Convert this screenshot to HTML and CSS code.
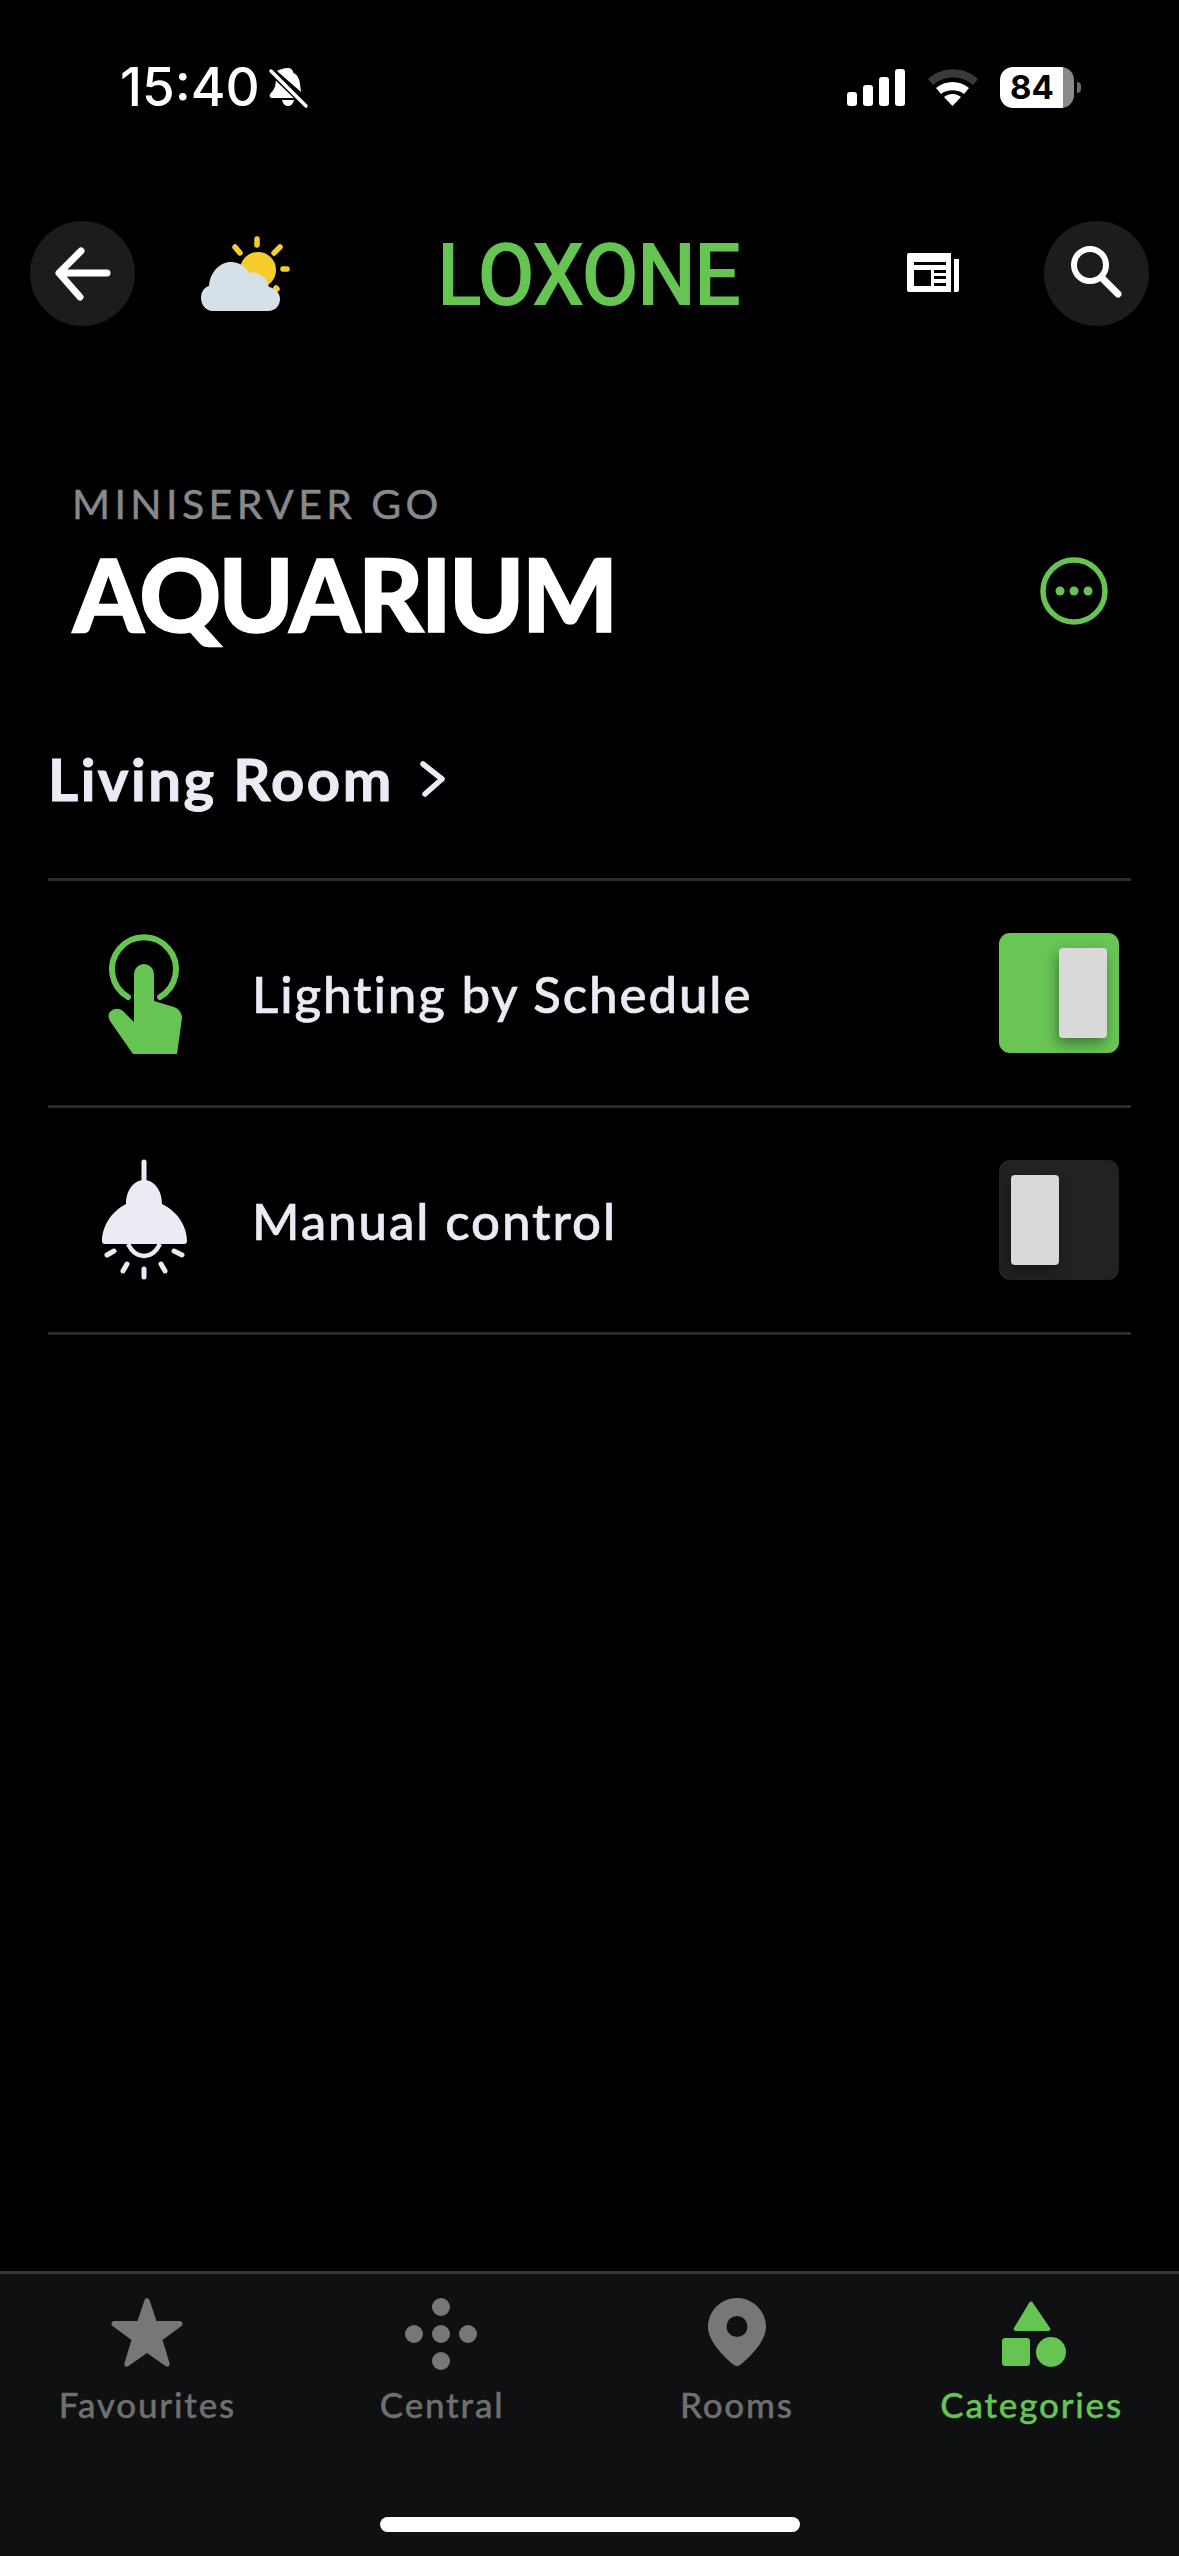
FILE: index.html
```html
<!DOCTYPE html>
<html lang="en">
<head>
<meta charset="utf-8">
<title>Loxone Aquarium</title>
<link rel="stylesheet" href="styles.css">
</head>
<body>
<div class="app">
  <div class="status">
    <div class="status-left">
      <span class="time">15:40</span>
      <svg class="bell" viewBox="266 66 43 44" width="43" height="44">
        <path fill="#fff" d="M287 68c3 0 5 2 5.500 5 4 2 6 6 6.500 11l1 8-24-21 c2-1 6-3 11-3zM276 77l19 21h-24c-2 0-3-2-2-4 3-3 5-6 5.500-10 .2-3 .7-5 1.500-7zM281 100h12c-1 4-3 6-6 6s-5-2-6-6z"/>
        <path stroke="#000" stroke-width="7" d="M268 69l39 38"/>
        <path stroke="#fff" stroke-width="3.500" stroke-linecap="round" d="M270 71l35 35"/>
      </svg>
    </div>
    <div class="status-right">
      <svg class="signal" viewBox="846 69 58 37" width="58" height="37">
        <rect x="846" y="92" width="10" height="14" rx="3" fill="#fff"/>
        <rect x="862" y="85" width="10" height="21" rx="3" fill="#fff"/>
        <rect x="878" y="77" width="10" height="29" rx="3" fill="#fff"/>
        <rect x="894" y="69" width="10" height="37" rx="3" fill="#fff"/>
      </svg>
      <svg class="wifi" viewBox="927 69 50 37" width="50" height="37">
        <path fill="#3a3a3a" d="M927 79c14-13 36-13 50 0l-5 6c-11-10-29-10-40 0z"/>
        <path fill="#fff" d="M935 88c9-8 24-8 33 0l-5 6c-6-5-17-5-23 0zM943 97c5-4 12-4 17 0l-8.500 9z"/>
      </svg>
      <div class="battery">
        <span class="battery-level">84</span>
        <span class="battery-nub"></span>
      </div>
    </div>
  </div>

  <header class="topbar">
    <button class="round-btn">
      <svg viewBox="0 0 105 105" width="105" height="105"><path fill="none" stroke="#fff" stroke-width="7" stroke-linecap="round" stroke-linejoin="round" d="M77 52H30M51 30L29 52l21 24"/></svg>
    </button>
    <svg class="weather" viewBox="195 230 100 85" width="100" height="85">
      <g stroke="#f6ce2c" stroke-width="5.500" stroke-linecap="round">
        <path d="M257 237v6M235 245l5 6M280 245l-6 6M283 267h4M276 286l1 1"/>
      </g>
      <circle cx="258" cy="268" r="18" fill="#f6ce2c"/>
      <path fill="#d5e0e8" d="M213 309c-8 0-12-7-12-13 0-7 4-11 8-12 1-14 11-24 22-24 9 0 15 5 18 11 9-2 17 3 20 14 6 1 11 6 11 12 0 7-5 12-12 12z"/>
    </svg>
    <div class="logo">LOXONE</div>
    <svg class="news" viewBox="907 253 52 39" width="52" height="39">
      <path fill="#fff" d="M909 253h42v39h-42a2 2 0 0 1-2-2v-35a2 2 0 0 1 2-2zM954 259h5v31a2 2 0 0 1-2 2h-3z"/>
      <path fill="#000" d="M914 262h32v3h-32zM914 270h17v16h-17zM934 270h12v3h-12zM934 276h12v3h-12zM934 283h12v3h-12z"/>
    </svg>
    <button class="round-btn">
      <svg viewBox="1044 221 105 105" width="105" height="105"><circle cx="1090" cy="265" r="16" fill="none" stroke="#fff" stroke-width="6"/><path stroke="#fff" stroke-width="7" stroke-linecap="round" d="M1103 279l15 15"/></svg>
    </button>
  </header>

  <section class="title-block">
    <div class="title-text">
      <div class="eyebrow">MINISERVER GO</div>
      <h1 class="title">AQUARIUM</h1>
    </div>
    <svg class="more" viewBox="0 0 68 68" width="68" height="68">
      <circle cx="34" cy="34" r="31" fill="none" stroke="#66c452" stroke-width="5.500"/>
      <circle cx="20" cy="34" r="4.500" fill="#66c452"/><circle cx="34" cy="34" r="4.500" fill="#66c452"/><circle cx="48" cy="34" r="4.500" fill="#66c452"/>
    </svg>
  </section>

  <h2 class="group">Living Room
    <svg class="chev" viewBox="0 0 26 36" width="26" height="36"><path fill="none" stroke="#ebebf5" stroke-width="5.500" stroke-linecap="round" stroke-linejoin="round" d="M3 3l19 15L5 33"/></svg>
  </h2>

  <div class="list">
    <div class="row">
      <svg class="row-icon" viewBox="100 925 90 135" width="90" height="135">
        <path fill="none" stroke="#66c452" stroke-width="6" stroke-linecap="round" d="M128 996a32 32 0 1 1 32 0"/>
        <path fill="#66c452" d="M134 973a10 10 0 0 1 20 0v27l20 6c5 2 8 6 8 11l-5 36h-44l-23-33c-2-4-2-8 1-10 4-3 8-3 12 0l11 11z"/>
      </svg>
      <span class="row-label">Lighting by Schedule</span>
      <div class="toggle on"><span class="knob"></span></div>
    </div>
    <div class="row">
      <svg class="row-icon" viewBox="100 1155 90 135" width="90" height="135">
        <path stroke="#ebebf5" stroke-width="5" stroke-linecap="round" d="M144 1164v20"/>
        <path fill="#ebebf5" d="M126 1206c0-14 8-24 18-24s18 10 18 24c15 7 25 22 25 37 0 2-1 3-3 3h-79c-2 0-3-1-3-3 0-15 10-30 24-37z"/>
        <path fill="none" stroke="#ebebf5" stroke-width="4.500" d="M128 1246c4 8 10 12 16 12s12-4 16-12"/>
        <g stroke="#ebebf5" stroke-width="5" stroke-linecap="round" fill="none">
          <path d="M107 1257l7-4M123 1273l4-7M144 1271v8M161 1266l4 7M174 1253l8 4"/>
        </g>
      </svg>
      <span class="row-label">Manual control</span>
      <div class="toggle off"><span class="knob"></span></div>
    </div>
  </div>

  <nav class="tabs">
    <div class="tab">
      <svg viewBox="107 2295 80 75" width="80" height="75"><path fill="#777" d="M147 2298c1 0 2 1 2.500 2l7 21h23c3 0 4 3 2 5l-19 14 7 23c1 3-2 5-4 3l-18.500-13-18.500 13c-2 2-5 0-4-3l7-23-19-14c-2-2-1-5 2-5h23l7-21c.5-1 1.500-2 2.500-2z"/></svg>
      <span class="tab-label">Favourites</span>
    </div>
    <div class="tab">
      <svg viewBox="402 2295 80 75" width="80" height="75"><g fill="#777"><ellipse cx="441" cy="2307" rx="9" ry="9"/><ellipse cx="414" cy="2334" rx="9" ry="9"/><ellipse cx="441" cy="2334" rx="9" ry="9"/><ellipse cx="468" cy="2334" rx="9" ry="9"/><ellipse cx="441" cy="2361" rx="9" ry="9"/></g></svg>
      <span class="tab-label">Central</span>
    </div>
    <div class="tab">
      <svg viewBox="698 2295 80 75" width="80" height="75"><path fill="#777" fill-rule="evenodd" d="M738 2298c16 0 29 13 29 29 0 14-16 30-26 38-2 1.500-4 1.500-6 0-10-8-26-24-26-38 0-16 13-29 29-29zM738 2316a10.500 10.500 0 1 0 0 21 10.500 10.500 0 0 0 0-21z"/></svg>
      <span class="tab-label">Rooms</span>
    </div>
    <div class="tab active">
      <svg viewBox="990 2295 80 75" width="80" height="75"><g fill="#66c452"><path d="M1027 2303c1-2 3-2 4 0l17 25c1 1 0 3-2 3h-32c-2 0-3-2-2-3z"/><rect x="1000" y="2338" width="28" height="28" rx="3"/><circle cx="1049" cy="2352" r="15"/></g></svg>
      <span class="tab-label">Categories</span>
    </div>
    <div class="home-indicator"></div>
  </nav>
</div>
</body>
</html>
```
FILE: styles.css
```css
* { box-sizing: border-box; }
html, body { margin: 0; padding: 0; background: #000; }
.app {
  width: 1179px;
  height: 2556px;
  display: flex;
  flex-direction: column;
  background: #000;
  font-family: "Lato", "Liberation Sans", sans-serif;
  color: #ebebf5;
  overflow: hidden;
}
svg { display: block; flex: none; }

/* status bar */
.status {
  height: 221px;
  padding: 60px 98px 0 120px;
  display: flex;
  justify-content: space-between;
  align-items: flex-start;
}
.status-left { display: flex; align-items: center; gap: 7px; }
.time {
  font: 500 53px/54px "Inter", sans-serif;
  color: #fff;
}
.bell { margin-top: 2px; }
.status-right { display: flex; align-items: center; margin-top: 7px; }
.wifi { margin-left: 23px; }
.battery {
  position: relative;
  margin-left: 22px;
  margin-right: 7px;
  width: 74px;
  height: 41px;
  border-radius: 13px;
  background: linear-gradient(90deg, #fff 0 63px, #8a8a8a 63px);
  display: flex;
  align-items: center;
  justify-content: center;
  padding-right: 10px;
}
.battery-level { font: 700 33px/41px "Inter", sans-serif; color: #000; }
.battery-nub {
  position: absolute;
  left: 77px;
  top: 15px;
  width: 4px;
  height: 11px;
  border-radius: 0 5px 5px 0;
  background: #6a6a6a;
}

/* top bar */
.topbar {
  height: 105px;
  padding: 0 30px;
  display: flex;
  align-items: center;
}
.round-btn {
  width: 105px;
  height: 105px;
  padding: 0;
  border: 0;
  border-radius: 50%;
  background: #1a1c1e;
}
.weather { margin-left: 60px; margin-top: 1px; }
.logo {
  margin-left: 142px;
  width: 305px;
  font: 500 88px/105px "Roboto", sans-serif;
  color: #66c452;
  transform: scaleX(0.945);
  transform-origin: left center;
  white-space: nowrap;
  letter-spacing: -2px;
  margin-top: 1px;
}
.news { margin-left: 165px; margin-top: -2px; }
.round-btn:last-child { margin-left: 85px; }

/* title */
.title-block {
  margin-top: 156px;
  padding: 0 72px;
  display: flex;
  justify-content: space-between;
  align-items: flex-end;
}
.eyebrow {
  font-size: 41px;
  line-height: 44px;
  letter-spacing: 4.400px;
  color: #88888d;
  -webkit-text-stroke: 0.5px #88888d;
}
.title {
  margin: 19px 0 0 1px;
  font-size: 101px;
  line-height: 96px;
  font-weight: 900;
  letter-spacing: -2.500px;
  color: #fff;
  -webkit-text-stroke: 1.500px #fff;
}
.more { margin: 0 -1px 16px 0; }

/* group heading */
.group {
  margin: 100px 48px 0;
  display: flex;
  align-items: center;
  gap: 26px;
  font-size: 58px;
  line-height: 76px;
  font-weight: 700;
  letter-spacing: 2.500px;
  color: #ebebf5;
  -webkit-text-stroke: 1px #ebebf5;
}

/* rows */
.list { margin: 61px 48px 0; border-top: 3px solid #2c2c2e; }
.row {
  height: 227px;
  padding: 0 12px 0 52px;
  display: flex;
  align-items: center;
  border-bottom: 3px solid #2c2c2e;
}
.row-label {
  margin-left: 62px;
  flex: 1;
  font-size: 51px;
  font-weight: 500;
  letter-spacing: 1.900px;
  color: #ebebf5;
  -webkit-text-stroke: 0.6px #ebebf5;
}
.toggle {
  position: relative;
  width: 120px;
  height: 120px;
  border-radius: 11px;
  padding: 15px 12px;
  display: flex;
}
.toggle.on { background: #69c655; justify-content: flex-end; }
.toggle.off { background: #222; justify-content: flex-start; }
.knob {
  width: 48px;
  height: 90px;
  border-radius: 4px;
  background: #d9d9d9;
  box-shadow: -2px 6px 14px rgba(0, 0, 0, 0.4);
}

/* tabs */
.tabs {
  position: relative;
  margin-top: auto;
  height: 285px;
  padding-top: 21px;
  display: grid;
  grid-template-columns: repeat(4, 1fr);
  align-content: start;
  background: #0f1012;
  border-top: 3px solid #38383a;
}
.tab {
  display: flex;
  flex-direction: column;
  align-items: center;
  color: #6f6f6f;
}
.tab.active { color: #66c452; }
.tab-label {
  margin-top: 13px;
  font-size: 35px;
  line-height: 42px;
  font-weight: 500;
  letter-spacing: 1.800px;
  -webkit-text-stroke: 0.4px currentColor;
}
.home-indicator {
  position: absolute;
  left: 380px;
  top: 243px;
  width: 420px;
  height: 15px;
  border-radius: 8px;
  background: #fff;
}
```
